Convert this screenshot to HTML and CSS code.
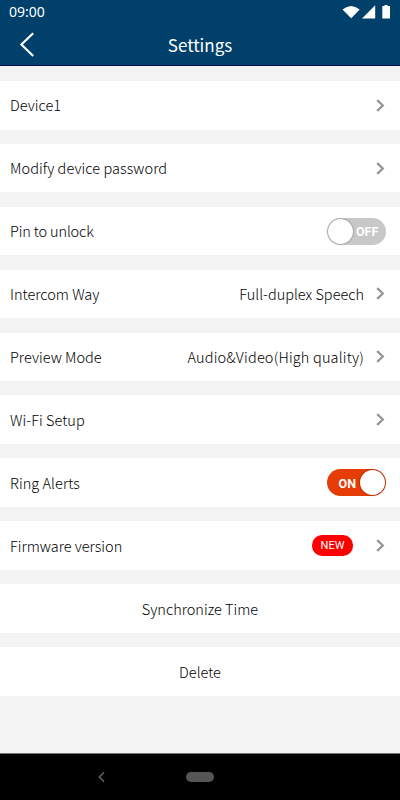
FILE: index.html
```html
<!DOCTYPE html>
<html lang="en">
<head>
<meta charset="utf-8">
<title>Settings</title>
<link rel="stylesheet" href="styles.css">
</head>
<body>
<header class="header">
  <div class="status">
    <span class="clock">09:00</span>
    <svg class="status-icons" width="50" height="16" viewBox="0 0 50 16" fill="#fff">
      <path d="M0.5 5.500Q9-1.500 17.700 5.500L9.200 14.200Z"/>
      <path d="M20 14.500L33.200 1.200V14.500Z"/>
      <path d="M42.500 1H45.500V2H48V14.400H40.300V2H42.500Z"/>
    </svg>
  </div>
  <div class="titlebar">
    <svg class="back" width="16" height="26" viewBox="0 0 16 26" fill="none" stroke="#fff" stroke-width="2.200"><path d="M14.200 1.200L2.400 12.500L14.200 24"/></svg>
    <h1 class="title">Settings</h1>
  </div>
</header>
<main class="list">
  <div class="row raised"><span class="label">Device1</span><svg class="chevron" viewBox="0 0 9 13"><path d="M1.200 1.200L6.800 6.500L1.200 11.800"/></svg></div>
  <div class="row raised"><span class="label loose">Modify device password</span><svg class="chevron" viewBox="0 0 9 13"><path d="M1.200 1.200L6.800 6.500L1.200 11.800"/></svg></div>
  <div class="row raised"><span class="label tight">Pin to unlock</span><span class="switch off"><i class="knob"></i><span class="state">OFF</span></span></div>
  <div class="row"><span class="label">Intercom Way</span><span class="value">Full-duplex Speech</span><svg class="chevron" viewBox="0 0 9 13"><path d="M1.200 1.200L6.800 6.500L1.200 11.800"/></svg></div>
  <div class="row"><span class="label">Preview Mode</span><span class="value wide">Audio&amp;Video(High quality)</span><svg class="chevron" viewBox="0 0 9 13"><path d="M1.200 1.200L6.800 6.500L1.200 11.800"/></svg></div>
  <div class="row"><span class="label loose">Wi-Fi Setup</span><svg class="chevron" viewBox="0 0 9 13"><path d="M1.200 1.200L6.800 6.500L1.200 11.800"/></svg></div>
  <div class="row"><span class="label loose">Ring Alerts</span><span class="switch on"><span class="state">ON</span><i class="knob"></i></span></div>
  <div class="row"><span class="label">Firmware version</span><span class="badge">NEW</span><svg class="chevron" viewBox="0 0 9 13"><path d="M1.200 1.200L6.800 6.500L1.200 11.800"/></svg></div>
  <div class="row action">Synchronize Time</div>
  <div class="row action">Delete</div>
</main>
<footer class="navbar">
  <svg class="nav-back" width="8" height="12" viewBox="0 0 8 12" fill="none" stroke="#686868" stroke-width="1.400"><path d="M6 1.200L1.300 6L6 10.800"/></svg>
  <span class="pill"></span>
</footer>
</body>
</html>
```

FILE: styles.css
```css
* { box-sizing: border-box; }
body {
  margin: 0;
  width: 400px;
  height: 800px;
  display: flex;
  flex-direction: column;
  overflow: hidden;
  background: #f3f3f3;
  color: #000;
  font-family: "Noto Sans CJK SC", "Noto Sans", sans-serif;
  font-weight: 300;
  font-size: 14.5px;
}
.header {
  height: 66px;
  flex: none;
  background: #00406b;
  border-bottom: 1px solid #00084f;
  color: #fff;
}
.status {
  height: 25px;
  display: flex;
  justify-content: space-between;
  padding: 4px 8px 0 9px;
}
.clock { font: 400 14px/15px "Noto Sans", sans-serif; }
.titlebar {
  height: 40px;
  display: grid;
  grid-template-columns: 40px 1fr 40px;
  align-items: center;
}
.back { margin-left: 19px; }
.title {
  margin: 0;
  text-align: center;
  font-size: 17px;
  font-weight: 400;
  line-height: 40px;
}
.list {
  flex: 1;
  padding-top: 15px;
  display: flex;
  flex-direction: column;
  gap: 14.4px;
}
.row {
  height: 48.5px;
  flex: none;
  display: flex;
  align-items: center;
  background: #fff;
  padding: 0 15px 0 10px;
  white-space: nowrap;
}
.label { margin-right: auto; }
.raised .label { padding-bottom: 2px; }
.tight { letter-spacing: -.15px; }
.loose { letter-spacing: .06px; }
.value.wide { letter-spacing: .18px; }
.chevron {
  width: 9px;
  height: 13px;
  margin-left: 12px;
  fill: none;
  stroke: #969696;
  stroke-width: 2.3;
}
.action { justify-content: center; padding: 0; }
.switch {
  width: 59px;
  height: 27px;
  margin-right: -1px;
  border-radius: 14px;
  display: flex;
  align-items: center;
  color: #fff;
  font: 700 12.5px/27px Roboto, sans-serif;
}
.state { padding-top: 1px; }
.off { background: #c8c8c8; padding-left: 1px; gap: 3px; }
.on { background: #e63c05; justify-content: flex-end; padding-right: 1px; gap: 4px; }
.knob {
  width: 25px;
  height: 25px;
  border-radius: 50%;
  background: #fff;
  box-shadow: 0 0 2px rgba(0, 0, 0, .5);
}
.badge {
  width: 41px;
  height: 21px;
  margin-right: 11px;
  border-radius: 10px;
  background: #f00;
  color: #fff;
  text-align: center;
  font: 400 11px/21px Roboto, sans-serif;
}
.navbar {
  height: 47px;
  flex: none;
  background: #000;
  border-top: 1px solid #777;
  display: grid;
  grid-template-columns: 88px 1fr 88px;
  align-items: center;
}
.nav-back { margin-left: 98px; margin-right: -18px; }
.pill {
  justify-self: center;
  width: 28px;
  height: 10px;
  border-radius: 5px;
  background: #555;
}
```
